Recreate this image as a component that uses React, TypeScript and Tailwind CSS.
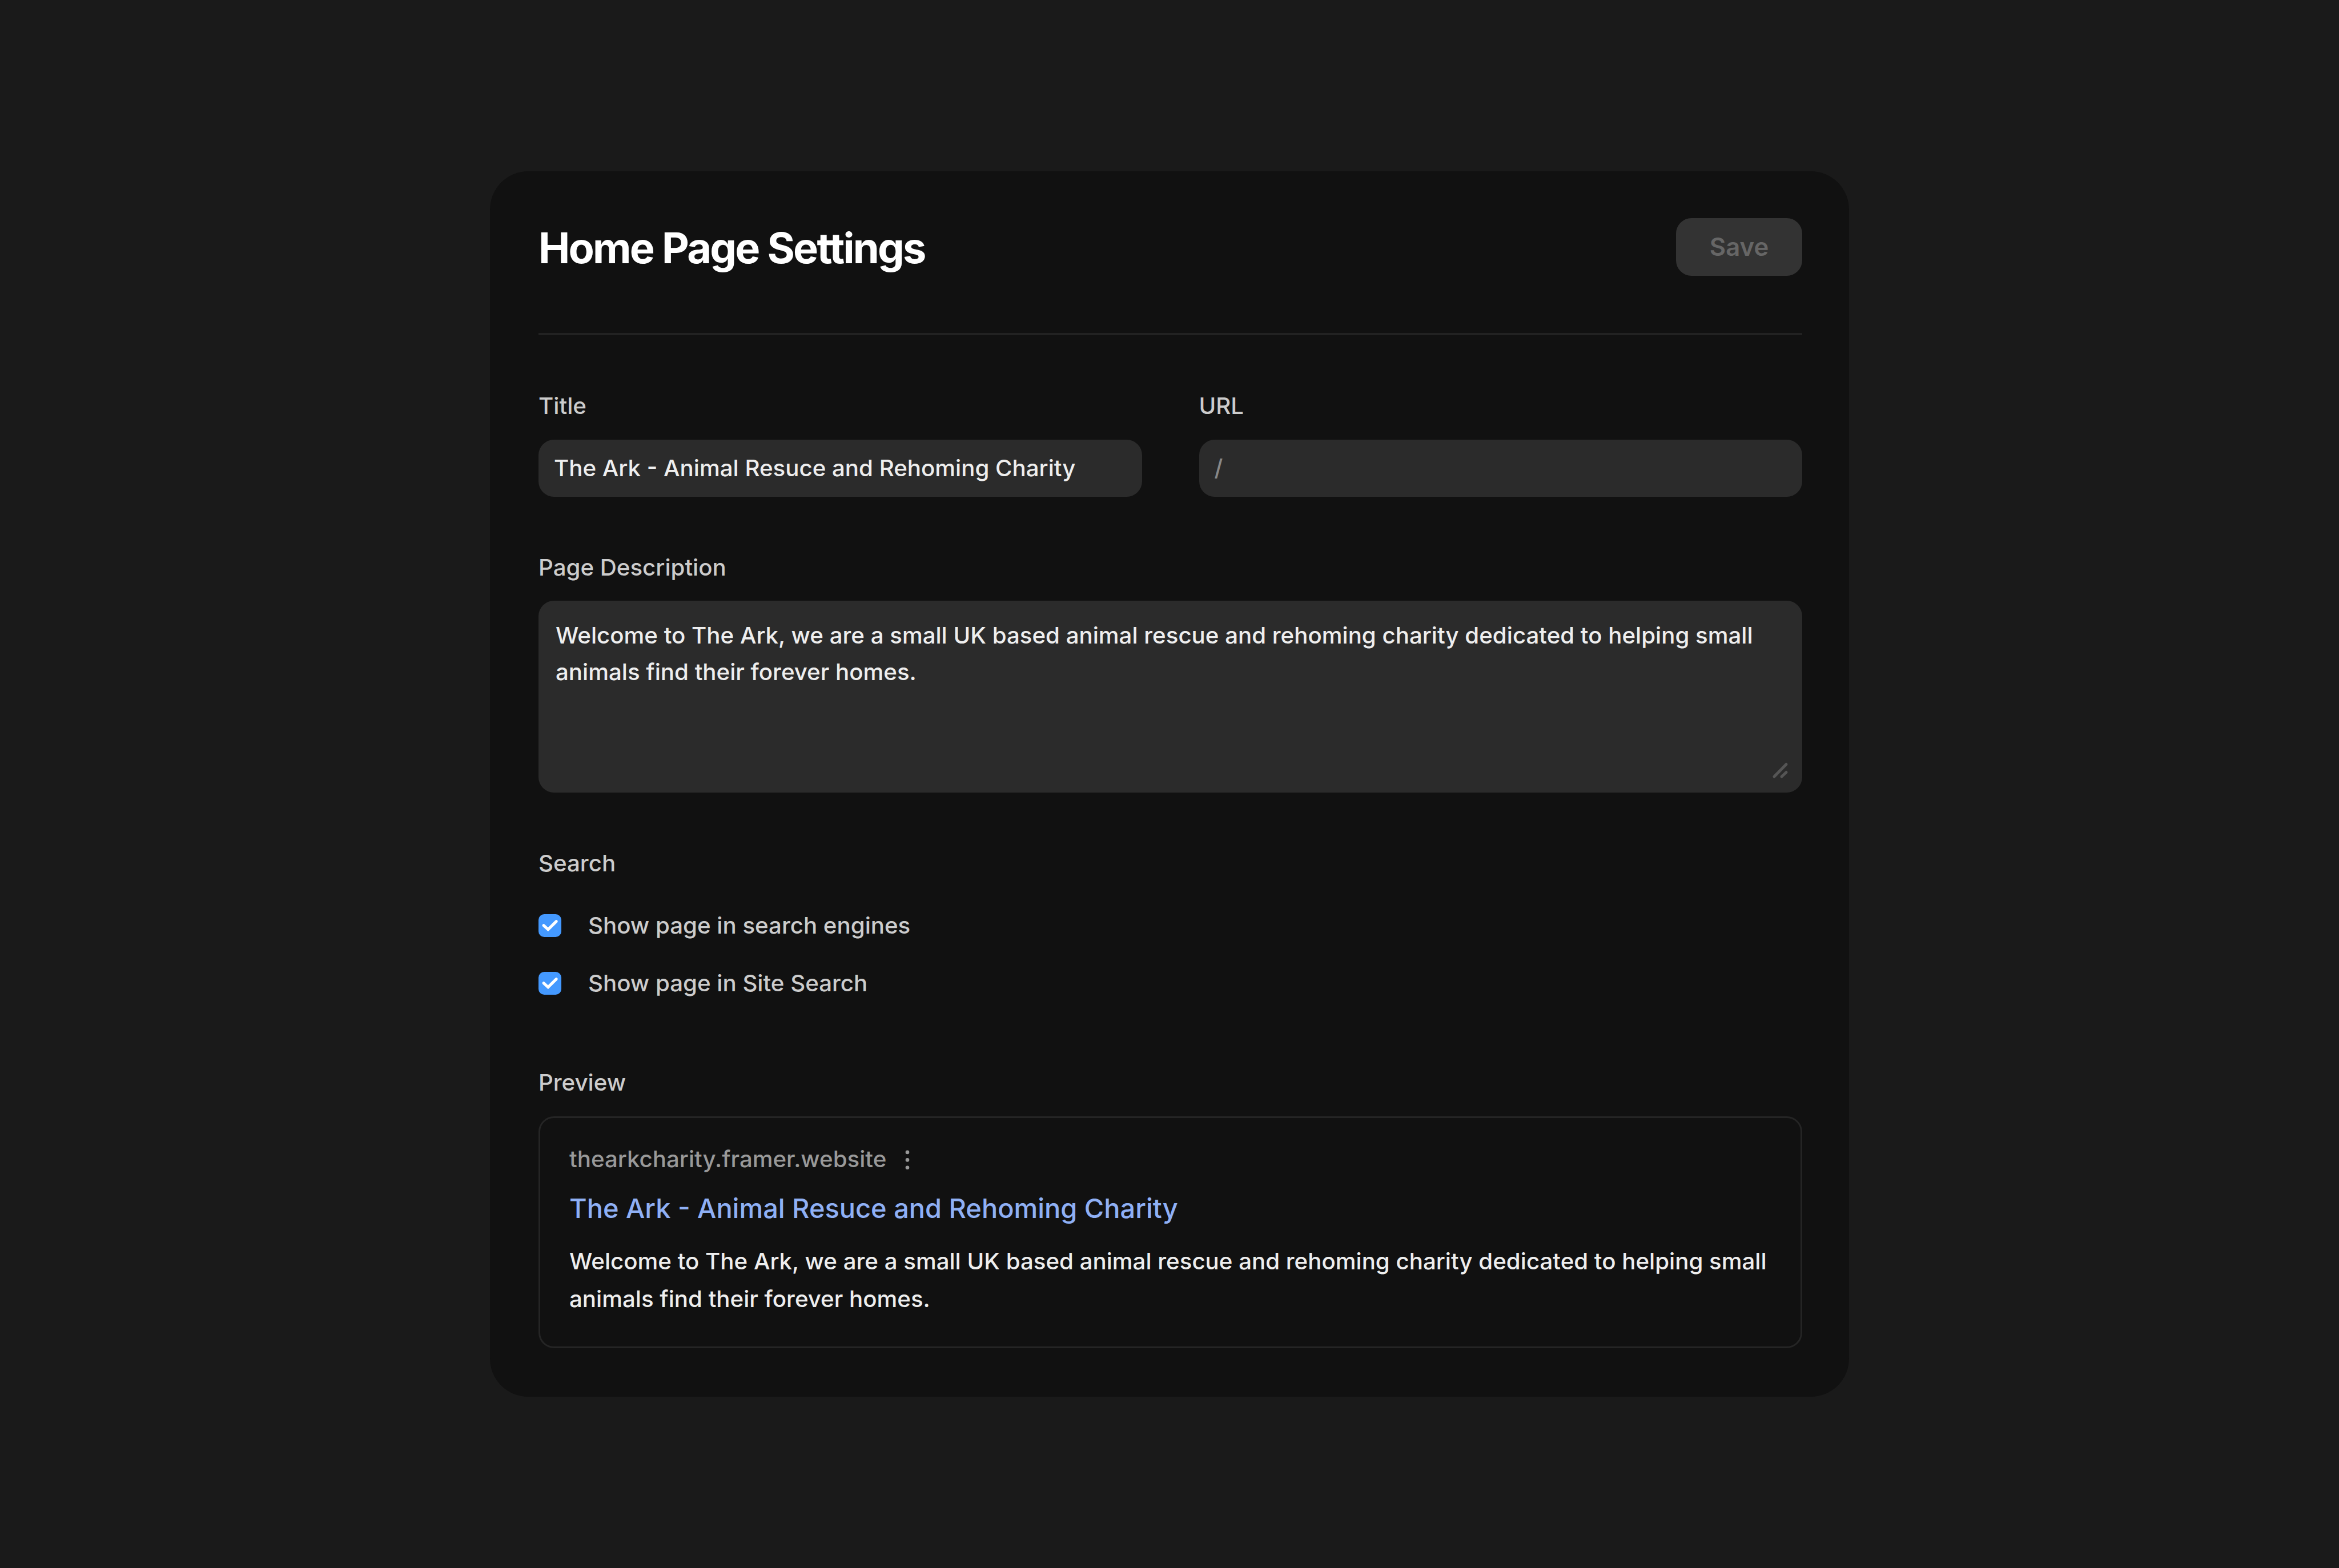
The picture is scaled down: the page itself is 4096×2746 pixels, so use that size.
// Page settings screen - SEO title, description, search visibility and preview

import { useState } from 'react';
import type { ReactNode } from 'react';

const PAGE_TITLE = 'The Ark - Animal Resuce and Rehoming Charity';
const PAGE_DESCRIPTION =
    'Welcome to The Ark, we are a small UK based animal rescue and rehoming charity dedicated to helping small animals find their forever homes.';

interface FieldLabelProps {
    children: ReactNode;
}

function FieldLabel({ children }: FieldLabelProps) {
    return (
        <div className="h-[50px] leading-[50px] text-[#cccccc]">{children}</div>
    );
}

interface CheckboxRowProps {
    label: string;
    checked: boolean;
    onToggle: () => void;
}

function CheckboxRow({ label, checked, onToggle }: CheckboxRowProps) {
    return (
        <button
            type="button"
            role="checkbox"
            aria-checked={checked}
            onClick={onToggle}
            className="flex h-10 items-center gap-[47px] text-left text-[#cccccc]"
        >
            <span className={`flex size-10 items-center justify-center rounded-[10px] ${checked ? 'bg-[#4499ff]' : 'bg-[#2b2b2b]'}`}>
                {checked && (
                    <svg viewBox="0 0 40 40" className="size-10" fill="none" stroke="white" strokeWidth="5">
                        <path d="M9 19.7 L16.8 26.8 L31.2 12.6" strokeLinecap="round" />
                    </svg>
                )}
            </span>
            <span className="leading-[50px]">{label}</span>
        </button>
    );
}

// Diagonal grip in the corner of the description box
function ResizeGrip() {
    return (
        <svg viewBox="0 0 30 30" className="absolute right-[24px] bottom-[24px] size-[30px]" fill="none" stroke="#555555" strokeWidth="5" strokeLinecap="round">
            <path d="M5 26 L26 4.5" />
            <path d="M18 26 L26 18.5" />
        </svg>
    );
}

export default function App() {
    const [title, setTitle] = useState(PAGE_TITLE);
    const [url, setUrl] = useState('');
    const [description, setDescription] = useState(PAGE_DESCRIPTION);
    const [inEngines, setInEngines] = useState(true);
    const [inSiteSearch, setInSiteSearch] = useState(true);

    return (
        <div className="flex h-[2746px] w-[4096px] items-center justify-center bg-[#1a1a1a] font-['Inter',sans-serif] text-[40.24px] font-medium text-[#eeeeee]">
            <main className="flex h-[2146px] w-[2380px] flex-col rounded-[67px] bg-[#111111] pt-[82px] pr-[82px] pl-[85px]">
                <header className="flex h-[101px] items-center justify-between">
                    <h1 className="pt-[3px] text-[73.94px] leading-[102px] font-bold tracking-[-0.037em] text-white">Home Page Settings</h1>
                    <button
                        type="button"
                        disabled
                        className="h-[101px] w-[221px] rounded-[27px] bg-[#333333] text-[43.7px] font-semibold text-[#666666]"
                    >
                        Save
                    </button>
                </header>
                <div className="mt-[100px] h-1 bg-[#222222]" />

                <div className="mt-[99px] grid grid-cols-2 gap-[100px]">
                    <label>
                        <FieldLabel>Title</FieldLabel>
                        <input
                            value={title}
                            onChange={e => setTitle(e.target.value)}
                            className="mt-[34px] block h-[100px] w-full rounded-[27px] bg-[#2b2b2b] px-[27px] pb-[2px] outline-none"
                        />
                    </label>
                    <label>
                        <FieldLabel>URL</FieldLabel>
                        <input
                            value={url}
                            placeholder="/"
                            onChange={e => setUrl(e.target.value)}
                            className="mt-[34px] block h-[100px] w-full rounded-[27px] bg-[#2b2b2b] px-[27px] pb-[2px] outline-none placeholder:text-[#888888]"
                        />
                    </label>
                </div>

                <div className="mt-[99px]">
                    <FieldLabel>Page Description</FieldLabel>
                    <div className="relative mt-[33px]">
                        <textarea
                            value={description}
                            onChange={e => setDescription(e.target.value)}
                            className="block h-[336px] w-full resize-none rounded-[27px] bg-[#2b2b2b] px-[30px] pt-[29px] leading-[64px] outline-none"
                        />
                        <ResizeGrip />
                    </div>
                </div>

                <div className="mt-[99px]">
                    <FieldLabel>Search</FieldLabel>
                    <div className="mt-[64px] flex flex-col gap-[61px]">
                        <CheckboxRow label="Show page in search engines" checked={inEngines} onToggle={() => setInEngines(!inEngines)} />
                        <CheckboxRow label="Show page in Site Search" checked={inSiteSearch} onToggle={() => setInSiteSearch(!inSiteSearch)} />
                    </div>
                </div>

                <div className="mt-[129px]">
                    <FieldLabel>Preview</FieldLabel>
                    <div className="mt-[34px] h-[406px] rounded-[27px] border-[3px] border-[#252525] px-[51px] pt-[47px]">
                        <div className="flex h-[50px] items-center gap-[33px] leading-[50px] text-[#999999]">
                            <span>thearkcharity.framer.website</span>
                            <svg viewBox="0 0 8 36" className="h-9 w-2" fill="currentColor">
                                <circle cx="4" cy="5.9" r="3.3" />
                                <circle cx="4" cy="19.4" r="3.3" />
                                <circle cx="4" cy="32.7" r="3.3" />
                            </svg>
                        </div>
                        <div className="mt-[31px] text-[46.94px] leading-[60px] text-[#8fb0f5]">{title}</div>
                        <p className="mt-[30px] leading-[65.6px]">{description}</p>
                    </div>
                </div>
            </main>
        </div>
    );
}
